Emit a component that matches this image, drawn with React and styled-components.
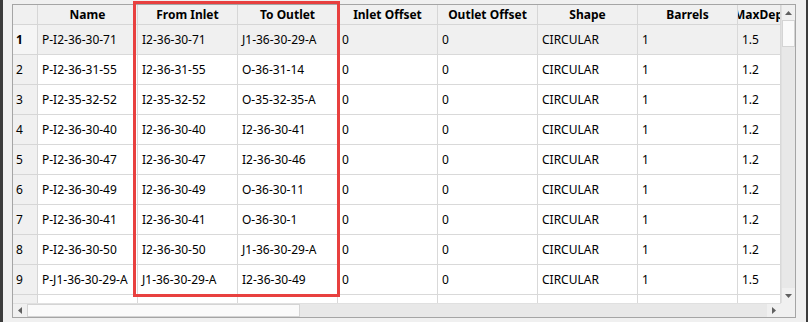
import React from "react";
import styled, { createGlobalStyle } from "styled-components";

const Global = createGlobalStyle`
  html, body { margin: 0; padding: 0; background: #f0f0f0; }
  body { font-family: "Noto Sans", "Open Sans", sans-serif; }
`;

const Page = styled.div`
  display: flex;
  width: 808px;
  height: 322px;
  overflow: hidden;
`;

const Strip = styled.div`
  width: ${(p) => p.$w}px;
  background: #3c3c3c;
  flex: none;
`;

const Main = styled.div`
  position: relative;
  flex: 1;
  background: #f0f0f0;
  padding: 4px 10px 4px 9px;
`;

const Frame = styled.div`
  border: 1px solid #a5a5a5;
  display: grid;
  grid-template-columns: 768px 14px;
  grid-template-rows: 298px 14px;
  background: #ffffff;
`;

const Viewport = styled.div`
  overflow: hidden;
  display: grid;
  grid-template-columns: 25px repeat(7, 100px) 43px;
  grid-auto-rows: 30px;
  grid-template-rows: 20px;
  align-content: start;
`;

const HeadCell = styled.div`
  background: #f0f0f0;
  border-right: 1px solid #d6d6d6;
  border-bottom: 1px solid #d6d6d6;
  display: flex;
  align-items: center;
  justify-content: center;
  padding-left: ${(p) => p.$shift || 0}px;
  font-size: 12px;
  font-weight: 700;
  color: #000;
  white-space: nowrap;
  overflow: hidden;
  box-sizing: border-box;
`;

const RowHead = styled.div`
  background: ${(p) => (p.$current ? "#f5f5f5" : "#f0f0f0")};
  border-right: 1px solid #d6d6d6;
  border-bottom: 1px solid #d6d6d6;
  display: flex;
  align-items: center;
  padding-left: 3px;
  font-size: 12px;
  font-weight: ${(p) => (p.$current ? 700 : 400)};
  color: #000;
  box-sizing: border-box;
`;

const Cell = styled.div`
  background: ${(p) => (p.$current ? "#f0f0f0" : "#ffffff")};
  border-right: 1px solid #d9d9d9;
  border-bottom: 1px solid #d9d9d9;
  display: flex;
  align-items: center;
  padding-left: 4px;
  font-size: 12px;
  color: #000;
  white-space: nowrap;
  overflow: hidden;
  box-sizing: border-box;
`;

const VScroll = styled.div`
  display: grid;
  grid-template-rows: 15px 27px 1fr 15px;
  background: #e8e8e8;
  border-left: 1px solid #e0e0e0;
  box-sizing: border-box;
`;

const HScroll = styled.div`
  display: grid;
  grid-template-columns: 14px 273px 1fr 14px;
  background: #e8e8e8;
  border-top: 1px solid #e0e0e0;
  box-sizing: border-box;
`;

const ArrowBtn = styled.div`
  display: flex;
  align-items: center;
  justify-content: center;
  background: #f0f0f0;
`;

const Thumb = styled.div`
  background: #fafafa;
  border: 1px solid #d4d4d4;
  box-sizing: border-box;
`;

const Corner = styled.div`
  background: #f0f0f0;
`;

const Highlight = styled.div`
  position: absolute;
  left: 130px;
  top: 1px;
  width: 207px;
  height: 296px;
  border: 3px solid #e8403f;
  box-sizing: border-box;
  pointer-events: none;
`;

const Arrow = ({ dir }) => {
  const pts = {
    up: "0,4 7,4 3.5,0",
    down: "0,0 7,0 3.5,4",
    left: "4,0 4,7 0,3.5",
    right: "0,0 0,7 4,3.5",
  }[dir];
  const vertical = dir === "up" || dir === "down";
  return (
    <svg width={vertical ? 7 : 4} height={vertical ? 4 : 7} viewBox={vertical ? "0 0 7 4" : "0 0 4 7"}>
      <polygon points={pts} fill="#606060" />
    </svg>
  );
};

const columns = ["Name", "From Inlet", "To Outlet", "Inlet Offset", "Outlet Offset", "Shape", "Barrels", "MaxDepth"];

const rows = [
  ["P-I2-36-30-71", "I2-36-30-71", "J1-36-30-29-A", "0", "0", "CIRCULAR", "1", "1.5"],
  ["P-I2-36-31-55", "I2-36-31-55", "O-36-31-14", "0", "0", "CIRCULAR", "1", "1.2"],
  ["P-I2-35-32-52", "I2-35-32-52", "O-35-32-35-A", "0", "0", "CIRCULAR", "1", "1.2"],
  ["P-I2-36-30-40", "I2-36-30-40", "I2-36-30-41", "0", "0", "CIRCULAR", "1", "1.2"],
  ["P-I2-36-30-47", "I2-36-30-47", "I2-36-30-46", "0", "0", "CIRCULAR", "1", "1.2"],
  ["P-I2-36-30-49", "I2-36-30-49", "O-36-30-11", "0", "0", "CIRCULAR", "1", "1.2"],
  ["P-I2-36-30-41", "I2-36-30-41", "O-36-30-1", "0", "0", "CIRCULAR", "1", "1.2"],
  ["P-I2-36-30-50", "I2-36-30-50", "J1-36-30-29-A", "0", "0", "CIRCULAR", "1", "1.2"],
  ["P-J1-36-30-29-A", "J1-36-30-29-A", "I2-36-30-49", "0", "0", "CIRCULAR", "1", "1.5"],
  ["", "", "", "", "", "", "", ""],
];

export default function App() {
  return (
    <>
      <Global />
      <Page>
        <Strip $w={3} />
        <Main>
          <Frame>
            <Viewport>
              <HeadCell />
              {columns.map((c, j) => (
                <HeadCell key={c} $shift={j === columns.length - 1 ? 12 : 0}>
                  {c}
                </HeadCell>
              ))}
              {rows.map((r, i) => (
                <React.Fragment key={i}>
                  <RowHead $current={i === 0}>{r[0] ? i + 1 : ""}</RowHead>
                  {r.map((v, j) => (
                    <Cell key={j} $current={i === 0}>
                      {v}
                    </Cell>
                  ))}
                </React.Fragment>
              ))}
            </Viewport>
            <VScroll>
              <ArrowBtn>
                <Arrow dir="up" />
              </ArrowBtn>
              <Thumb />
              <div />
              <ArrowBtn>
                <Arrow dir="down" />
              </ArrowBtn>
            </VScroll>
            <HScroll>
              <ArrowBtn>
                <Arrow dir="left" />
              </ArrowBtn>
              <Thumb />
              <div />
              <ArrowBtn>
                <Arrow dir="right" />
              </ArrowBtn>
            </HScroll>
            <Corner />
          </Frame>
          <Highlight />
        </Main>
        <Strip $w={2} />
      </Page>
    </>
  );
}
